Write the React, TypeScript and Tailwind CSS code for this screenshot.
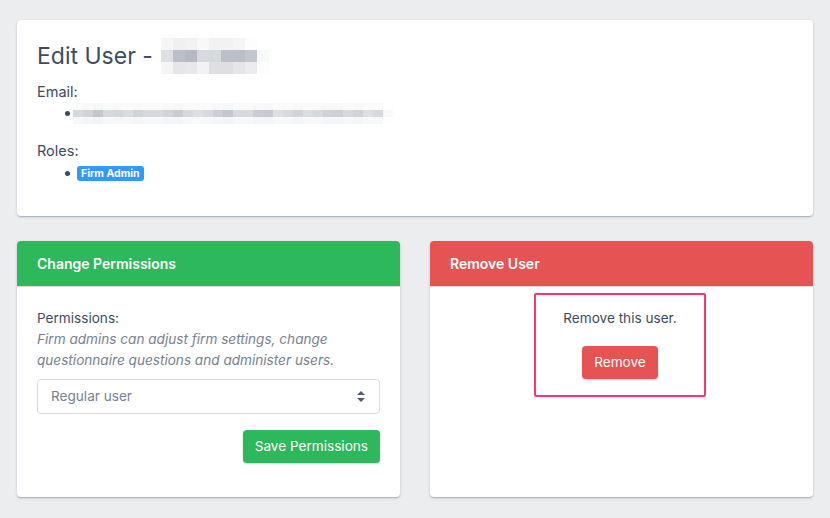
import { ReactNode } from 'react'

// pixelated "redacted" strip: rows of gray squares with varying alpha
function Blur({ cells, w, h }: { cells: number[][]; w: number; h: number }) {
  return (
    <div className="flex flex-col">
      {cells.map((row, r) => (
        <div key={r} className="flex">
          {row.map((a, i) => (
            <div key={i} style={{ width: w, height: h, backgroundColor: `rgba(120,128,145,${a})` }} />
          ))}
        </div>
      ))}
    </div>
  )
}

const nameCells = [
  [0.08, 0.12, 0.1, 0.06, 0.1, 0.1, 0.08, 0.02, 0],
  [0.25, 0.5, 0.55, 0.3, 0.3, 0.5, 0.5, 0.45, 0.05],
  [0.08, 0.2, 0.18, 0.1, 0.25, 0.25, 0.2, 0.15, 0.02],
]

const emailRow = [
  0.3, 0.35, 0.45, 0.3, 0.32, 0.28, 0.35, 0.3, 0.3, 0.35, 0.4, 0.3, 0.25, 0.3, 0.38, 0.45, 0.3, 0.3, 0.4, 0.42, 0.25,
  0.3, 0.35, 0.28, 0.3, 0.36, 0.38, 0.3, 0.35, 0.25, 0.3, 0.05,
]
const emailCells = [emailRow.map((a) => a * 0.15), emailRow, emailRow.map((a) => a * 0.2)]

function Card({ children, className = '' }: { children: ReactNode; className?: string }) {
  return (
    <div
      className={`bg-white rounded-[4px] shadow-[0_1px_1px_rgba(60,75,100,0.14),0_2px_1px_-1px_rgba(60,75,100,0.12),0_1px_3px_rgba(60,75,100,0.2)] ${className}`}
    >
      {children}
    </div>
  )
}

function Bullet({ children, gap }: { children: ReactNode; gap: string }) {
  return (
    <li className={`flex items-center pl-[28px] ${gap}`}>
      <span className="w-[5px] h-[5px] rounded-full bg-[#3c4b64] shrink-0" />
      {children}
    </li>
  )
}

export default function App() {
  return (
    <div
      className="min-h-[518px] bg-[#ebedef] px-[17px] pt-[20px] pb-[20px] text-[#3c4b64]"
      style={{ fontFamily: 'Inter, "Noto Sans", sans-serif' }}
    >
      <Card className="h-[196px] px-5 pt-[20px]">
        <div className="flex items-center h-[32px]">
          <h1 className="text-[23px] leading-[32px] font-normal text-[#3c4b64]">Edit User -&nbsp;</h1>
          <div className="mt-[-1px] ml-[2px]">
            <Blur cells={nameCells} w={12} h={12} />
          </div>
        </div>
        <div className="mt-[9px] text-[14.5px] leading-[22px]">Email:</div>
        <ul className="h-[21px] flex flex-col justify-center">
          <Bullet gap="gap-[3px]">
            <Blur cells={emailCells} w={10} h={7} />
          </Bullet>
        </ul>
        <div className="mt-[16px] text-[14.5px] leading-[22px]">Roles:</div>
        <ul className="mt-[4px]">
          <Bullet gap="gap-[7px]">
            <span className="inline-block bg-[#3399ff] text-white text-[10.5px] font-bold leading-[15px] px-[4px] rounded-[3px]">
              Firm Admin
            </span>
          </Bullet>
        </ul>
      </Card>

      <div className="mt-[25px] grid grid-cols-2 gap-[30px]">
        <Card className="overflow-hidden h-[256px] flex flex-col">
          <div className="bg-[#2eb85c] h-[46px] flex items-center px-5 text-white font-semibold text-[14px] border-b border-[#d8dbe0]">
            Change Permissions
          </div>
          <div className="px-5 pt-[21px] text-[13.6px]">
            <div className="leading-[21px]">Permissions:</div>
            <p className="italic text-[#768192] leading-[20.5px]">
              Firm admins can adjust firm settings, change questionnaire questions and administer users.
            </p>
            <div className="mt-[9px] h-[35px] border border-[#d8dbe0] rounded-[4px] flex items-center justify-between pl-[13px] pr-[14px] text-[#768192]">
              <span>Regular user</span>
              <svg width="8" height="11" viewBox="0 0 8 11">
                <path d="M4 0 L8 4 H0 Z" fill="#4f5d73" />
                <path d="M4 11 L8 7 H0 Z" fill="#4f5d73" />
              </svg>
            </div>
            <div className="flex justify-end mt-[16px]">
              <button className="bg-[#2eb85c] text-white text-[13.6px] h-[33px] px-[12px] rounded-[4px] shadow-[0_1px_2px_rgba(0,0,0,0.2)]">
                Save Permissions
              </button>
            </div>
          </div>
        </Card>

        <Card className="overflow-hidden h-[256px] flex flex-col">
          <div className="bg-[#e55353] h-[46px] flex items-center px-5 text-white font-semibold text-[14px] border-b border-[#d8dbe0]">
            Remove User
          </div>
          <div className="flex justify-center pt-[6px] pr-[3px]">
            <div className="w-[172px] h-[104px] border-2 border-[#ff3370] rounded-[2px] flex flex-col items-center pt-[13px] text-[13.6px]">
              <div className="leading-[21px]">Remove this user.</div>
              <button className="mt-[17px] bg-[#e55353] text-white text-[13.6px] h-[33px] px-[12px] rounded-[4px] shadow-[0_1px_2px_rgba(0,0,0,0.2)]">
                Remove
              </button>
            </div>
          </div>
        </Card>
      </div>
    </div>
  )
}
